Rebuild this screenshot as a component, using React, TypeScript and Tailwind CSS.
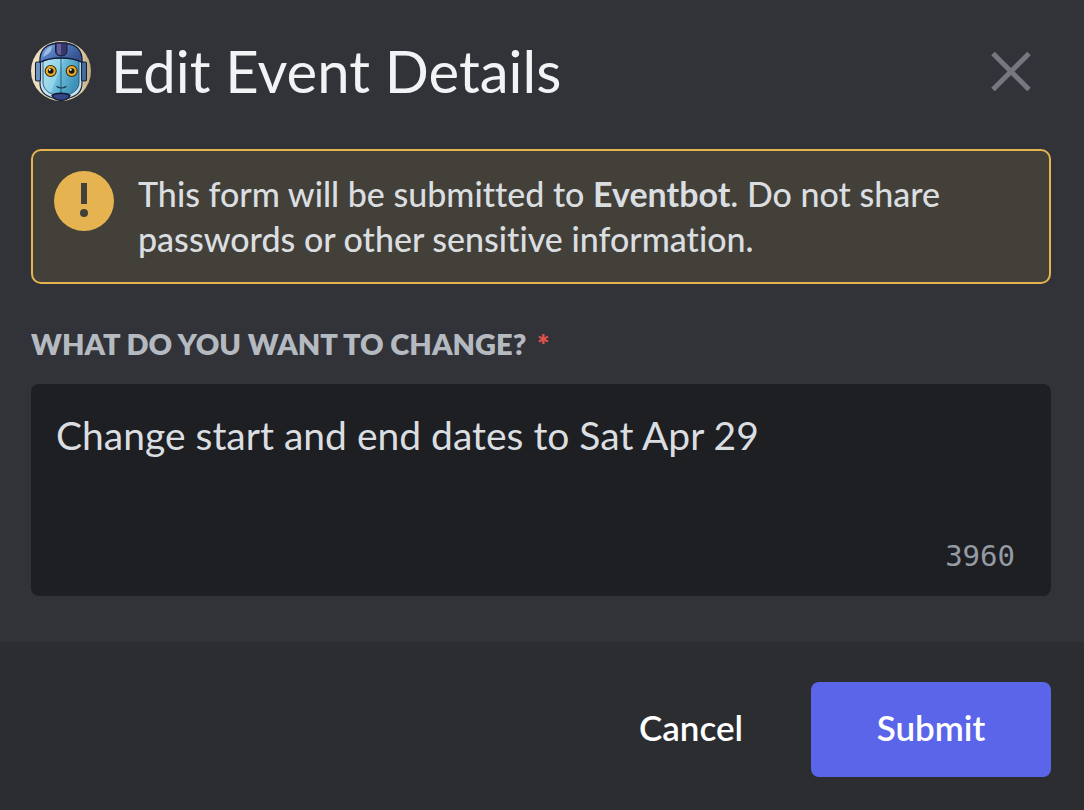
import { useState } from "react";

const MAX_LENGTH = 4000;

function BotAvatar() {
  return (
    <svg viewBox="0 0 60 60" className="size-15 shrink-0" role="img" aria-label="Eventbot">
      <defs>
        <clipPath id="avatar-clip">
          <circle cx="30" cy="30" r="30" />
        </clipPath>
        <linearGradient id="helmet" x1="0" y1="0" x2="1" y2="0.6">
          <stop offset="0" stopColor="#8bb8e8" />
          <stop offset="0.4" stopColor="#557fc2" />
          <stop offset="1" stopColor="#35508f" />
        </linearGradient>
        <linearGradient id="face" x1="0" y1="0" x2="1" y2="0.4">
          <stop offset="0" stopColor="#b4e4f0" />
          <stop offset="0.5" stopColor="#8fd3e8" />
          <stop offset="0.52" stopColor="#6fc0dc" />
          <stop offset="1" stopColor="#3f93b8" />
        </linearGradient>
        <linearGradient id="backdrop" x1="0" y1="0" x2="1" y2="0">
          <stop offset="0" stopColor="#f0e2c0" />
          <stop offset="0.85" stopColor="#dccaa0" />
          <stop offset="1" stopColor="#b8a47c" />
        </linearGradient>
      </defs>
      <g clipPath="url(#avatar-clip)">
        <rect width="60" height="60" fill="url(#backdrop)" />
        <path d="M9 20h42v22c0 8-5 13-13 15H22C14 55 9 50 9 42Z" fill="#c3e0ec" stroke="#1b2b4b" strokeWidth="1.2" />
        <path d="M12 20c5-2 10-3 18-3s13 1 18 3v21c0 7-5 11-12 13H24c-7-2-12-6-12-13Z" fill="url(#face)" stroke="#24506e" strokeWidth="0.9" />
        <path d="M30 17v36" stroke="#20516f" strokeWidth="0.9" />
        <path d="M9 21.500C8 8 16 2 30 2s22 6 21 19.500c-5-3-11-4.500-21-4.500S14 18.500 9 21.500Z" fill="url(#helmet)" stroke="#131f3d" strokeWidth="1.3" />
        <path d="M12 16c1-5 4-9 9-11l-1 5c-2 3-5 4-8 6Z" fill="#c3dcf5" opacity="0.6" />
        <path d="M24.500 2h11.500v8c0 3-2 5-5.700 5s-5.800-2-5.800-5Z" fill="#3a3668" stroke="#131f3d" strokeWidth="1" />
        <path d="M26 3h4v11c-3 0-4-2-4-4Z" fill="#665f9d" />
        <rect x="4.500" y="21" width="5" height="19" rx="1.500" fill="#6c94bf" stroke="#13203c" strokeWidth="1.1" />
        <rect x="50.500" y="21" width="5" height="19" rx="1.500" fill="#466b9f" stroke="#13203c" strokeWidth="1.1" />
        <circle cx="19.700" cy="30" r="5.500" fill="#e9ad25" stroke="#3b2b18" strokeWidth="1.1" />
        <circle cx="40.700" cy="30" r="5.500" fill="#e9ad25" stroke="#3b2b18" strokeWidth="1.1" />
        <circle cx="19.700" cy="30" r="2.800" fill="#181310" />
        <circle cx="40.700" cy="30" r="2.800" fill="#181310" />
        <circle cx="18.700" cy="28.800" r="1" fill="#fff" />
        <circle cx="39.700" cy="28.800" r="1" fill="#fff" />
        <path d="M26 45.500c2 2 7 2 9 0" stroke="#17364d" strokeWidth="1.1" fill="none" strokeLinecap="round" />
        <path d="M21 54.500c4-3 14-3 18 0-2 4-5 5-9 5s-7-1-9-5Z" fill="#34468a" stroke="#10182e" strokeWidth="1.300" />
      </g>
    </svg>
  );
}

function WarningIcon() {
  return (
    <svg viewBox="0 0 60 60" className="size-15 shrink-0" aria-hidden="true">
      <circle cx="30" cy="30" r="30" fill="#e5b350" />
      <path d="M27 12h6v21h-6z" fill="#434039" />
      <circle cx="30" cy="42" r="4" fill="#434039" />
    </svg>
  );
}

export default function App() {
  const [text, setText] = useState("Change start and end dates to Sat Apr 29");

  return (
    <form
      className="flex min-h-screen flex-col bg-[#323338] font-['Lato',sans-serif] [font-variant-ligatures:none]"
      onSubmit={(event) => event.preventDefault()}
    >
      <header className="flex items-center pt-[35px] pr-[33px] pl-[31px]">
        <BotAvatar />
        <h1 className="ml-5 flex-1 text-[58px] leading-[72px] text-[#f2f3f5]">Edit Event Details</h1>
        <button type="button" aria-label="Close" className="mr-5 text-[#75787f]">
          <svg viewBox="0 0 40 40" className="size-10" fill="none" stroke="currentColor" strokeWidth="5">
            <path d="M2 2.500l36 36M38 2.500l-36 36" />
          </svg>
        </button>
      </header>

      <main className="flex-1 pt-[42px] pr-[33px] pb-[46px] pl-[31px]">
        <div className="flex items-start gap-6 rounded-[10px] border-2 border-[#e5b350] bg-[#434039] px-[21px] pt-5 pb-[21px]">
          <WarningIcon />
          <p className="text-[34px] leading-[45px] font-medium text-[#dbdee1]">
            This form will be submitted to <strong className="font-bold">Eventbot</strong>. Do not share passwords or
            other sensitive information.
          </p>
        </div>

        <label htmlFor="change" className="mt-10 block text-[29px] leading-[40px] font-extrabold text-[#b5bac1] uppercase">
          What do you want to change? <span className="ml-1 text-[#e0524d]">*</span>
        </label>
        <div className="relative mt-5">
          <textarea
            id="change"
            required
            maxLength={MAX_LENGTH}
            value={text}
            onChange={(event) => setText(event.target.value)}
            className="block h-[212px] w-full resize-none rounded-lg bg-[#1e1f22] px-[25px] py-[26px] text-[39px] leading-[50px] text-[#dbdee1] outline-none"
          />
          <span className="absolute right-9 bottom-5 font-['DejaVu_Sans_Mono',monospace] text-[29px] leading-[40px] text-[#949ba4]">
            {MAX_LENGTH - text.length}
          </span>
        </div>
      </main>

      <footer className="flex items-center justify-end bg-[#2b2d31] pt-10 pr-[33px] pb-[33px] pl-[31px]">
        <button type="button" className="h-[95px] px-17 pb-1 text-[35px] font-semibold text-white">
          Cancel
        </button>
        <button type="submit" className="h-[95px] w-60 rounded-lg bg-[#5b65ea] pb-1 text-[35px] font-semibold text-white">
          Submit
        </button>
      </footer>
    </form>
  );
}
